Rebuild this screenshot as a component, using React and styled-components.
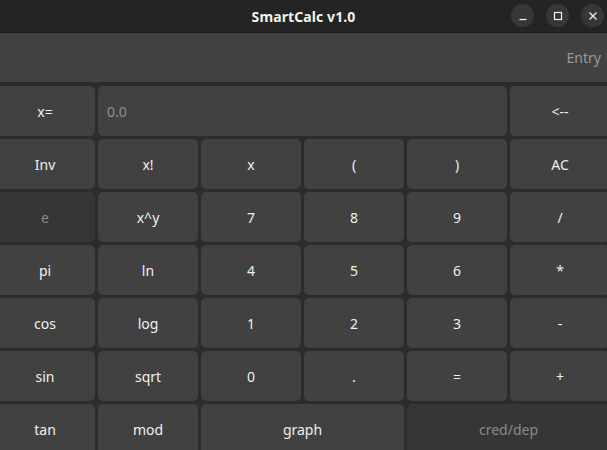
import React from 'react';
import styled, { createGlobalStyle } from 'styled-components';

const GlobalStyle = createGlobalStyle`
  html, body {
    margin: 0;
    padding: 0;
    background: #2c2c2c;
    font-family: "Noto Sans", "DejaVu Sans", sans-serif;
  }
`;

// ========== Basic Components =============
const Window = styled.div`
  width: 607px;
  height: 450px;
  overflow: hidden;
  background: #2c2c2c;
  display: flex;
  flex-direction: column;
`;

const TitleBar = styled.div`
  height: 32px;
  flex: none;
  background: #242424;
  border-bottom: 1px solid #1c1c1c;
  display: flex;
  align-items: center;
  justify-content: center;
  position: relative;
`;

const Title = styled.div`
  color: #f2f2f2;
  font-weight: 700;
  font-size: 14px;
  letter-spacing: 0.1px;
`;

const WindowControls = styled.div`
  position: absolute;
  right: 3px;
  top: 4px;
  display: flex;
  gap: 12px;
`;

const WindowButton = styled.div`
  width: 23px;
  height: 23px;
  border-radius: 50%;
  background: #373737;
  display: flex;
  align-items: center;
  justify-content: center;
`;

const EntryBar = styled.div`
  height: 49px;
  flex: none;
  background: #424242;
  display: flex;
  align-items: center;
  justify-content: flex-end;
  padding-right: 6px;
  color: #9a9a9a;
  font-size: 14px;
`;

const Keypad = styled.div`
  margin: 4px 0 0 -5px;
  display: grid;
  grid-template-columns: repeat(6, 100px);
  grid-auto-rows: 50px;
  gap: 3px;
`;

const Key = styled.div`
  background: ${(p) => (p.$muted ? '#363636' : '#414141')};
  color: ${(p) => (p.$muted ? '#8a8a8a' : '#f0f0f0')};
  grid-column: ${(p) => (p.$span ? `span ${p.$span}` : 'auto')};
  border-radius: 5px;
  display: flex;
  align-items: center;
  justify-content: center;
  font-size: 14px;
`;

const Display = styled.div`
  grid-column: span 4;
  background: #414141;
  border-radius: 5px;
  display: flex;
  align-items: center;
  padding-left: 9px;
  color: #8f8f8f;
  font-size: 14px;
`;

const rows = [
  ['Inv', 'x!', 'x', '(', ')', 'AC'],
  ['e', 'x^y', '7', '8', '9', '/'],
  ['pi', 'ln', '4', '5', '6', '*'],
  ['cos', 'log', '1', '2', '3', '-'],
  ['sin', 'sqrt', '0', '.', '=', '+']
];

export default function App() {
  return (
    <Window>
      <GlobalStyle />
      <TitleBar>
        <Title>SmartCalc v1.0</Title>
        <WindowControls>
          <WindowButton>
            <svg width='10' height='10' viewBox='0 0 10 10'>
              <path d='M1.5 8.5h7' stroke='#f0f0f0' strokeWidth='1.3' />
            </svg>
          </WindowButton>
          <WindowButton>
            <svg width='10' height='10' viewBox='0 0 10 10'>
              <rect x='1.5' y='1.5' width='7' height='7' fill='none' stroke='#f0f0f0' strokeWidth='1.2' />
            </svg>
          </WindowButton>
          <WindowButton>
            <svg width='10' height='10' viewBox='0 0 10 10'>
              <path d='M1.5 1.5l7 7M8.5 1.5l-7 7' stroke='#f0f0f0' strokeWidth='1.3' />
            </svg>
          </WindowButton>
        </WindowControls>
      </TitleBar>
      <EntryBar>Entry</EntryBar>
      <Keypad>
        <Key>x=</Key>
        <Display>0.0</Display>
        <Key>&lt;--</Key>
        {rows.flat().map((label, i) => (
          <Key key={i} $muted={label === 'e'}>{label}</Key>
        ))}
        <Key>tan</Key>
        <Key>mod</Key>
        <Key $span={2}>graph</Key>
        <Key $span={2} $muted>cred/dep</Key>
      </Keypad>
    </Window>
  );
}
